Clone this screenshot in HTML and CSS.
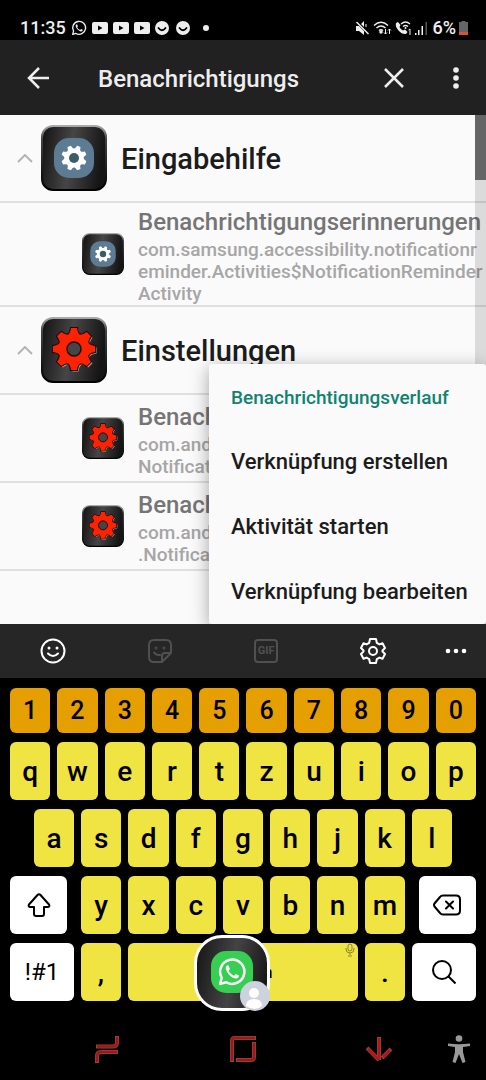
FILE: index.html
```
<!DOCTYPE html>
<html lang="de">
<head>
    <meta charset="UTF-8">
    <meta name="viewport" content="width=device-width, initial-scale=1.0">
    <title>Benachrichtigungs</title>
    <link rel="stylesheet" href="styles.css">
</head>
<body>
    <!-- shared app icons -->
    <svg class="defs" width="0" height="0" aria-hidden="true">
        <defs>
            <linearGradient id="tile" x1="0" y1="0" x2="1" y2="0.15">
                <stop offset="0" stop-color="#111"/>
                <stop offset="0.5" stop-color="#464646"/>
                <stop offset="1" stop-color="#151515"/>
            </linearGradient>
            <linearGradient id="rim" x1="0" y1="0" x2="0" y2="1">
                <stop offset="0" stop-color="#aaa"/>
                <stop offset="0.2" stop-color="#444"/>
                <stop offset="1" stop-color="#000"/>
            </linearGradient>
            <path id="tooth" d="M-7-13 Q-3.500-16-3-21H3Q3.500-16 7-13Z"/>
            <g id="gear">
                <circle r="15.500"/>
                <use href="#tooth"/>
                <use href="#tooth" transform="rotate(45)"/>
                <use href="#tooth" transform="rotate(90)"/>
                <use href="#tooth" transform="rotate(135)"/>
                <use href="#tooth" transform="rotate(180)"/>
                <use href="#tooth" transform="rotate(225)"/>
                <use href="#tooth" transform="rotate(270)"/>
                <use href="#tooth" transform="rotate(315)"/>
            </g>
            <symbol id="app-blue" viewBox="0 0 66 66">
                <rect x="1" y="1" width="64" height="64" rx="11" fill="url(#tile)" stroke="url(#rim)" stroke-width="2"/>
                <rect x="13" y="13" width="40" height="40" rx="15" fill="#5d7b92"/>
                <g transform="translate(33 33)">
                    <use href="#gear" transform="rotate(22.500) scale(0.600)" fill="#fff"/>
                    <circle r="5" fill="#3d5d66"/>
                </g>
            </symbol>
            <symbol id="app-red" viewBox="0 0 66 66">
                <rect x="1" y="1" width="64" height="64" rx="11" fill="url(#tile)" stroke="url(#rim)" stroke-width="2"/>
                <use href="#gear" transform="translate(34.500 33.500)" fill="#b39a85"/>
                <use href="#gear" transform="translate(33 32)" fill="#240500" stroke="#240500" stroke-width="2"/>
                <use href="#gear" transform="translate(33 32)" fill="#fb2304"/>
                <circle cx="33" cy="32" r="7" fill="#454545" stroke="#220c08" stroke-width="1.500"/>
            </symbol>
            <symbol id="youtube" viewBox="0 0 16 12">
                <path fill="#eee" fill-rule="evenodd" d="M2 0H14Q16 0 16 2V10Q16 12 14 12H2Q0 12 0 10V2Q0 0 2 0ZM6 3.500V8.500L10.500 6Z"/>
            </symbol>
            <symbol id="face" viewBox="0 0 14 14">
                <circle cx="7" cy="7" r="7" fill="#eee"/>
                <path d="M3.500 7Q7 11.500 10.500 7" fill="none" stroke="#000" stroke-width="1.800" stroke-linecap="round"/>
            </symbol>
            <symbol id="whatsapp" viewBox="0 0 24 24">
                <path d="M2.500 21.500L3.800 16.600A9.700 9.700 0 1 1 7.400 20.200Z" fill="none" stroke="currentColor" stroke-width="2" stroke-linejoin="round"/>
                <path d="M8.500 6.500C7 7 6.500 9 7.600 11C9 14 11.500 16.400 14.500 17.200C16.500 17.500 17.800 16.200 17.600 14.800L15 13.500L13.700 15C11.800 14.300 10.300 13 9.300 11L10.300 9.600L9.300 6.800Z" fill="currentColor"/>
            </symbol>
        </defs>
    </svg>

    <div class="statusbar">
        <div class="status-left">
            <span>11:35</span>
            <svg width="16" height="16"><use href="#whatsapp"/></svg>
            <svg width="16" height="12"><use href="#youtube"/></svg>
            <svg width="16" height="12"><use href="#youtube"/></svg>
            <svg width="16" height="12"><use href="#youtube"/></svg>
            <svg width="14" height="14"><use href="#face"/></svg>
            <svg class="face-last" width="14" height="14"><use href="#face"/></svg>
            <i class="dot"></i>
        </div>
        <div class="status-right">
            <svg width="15" height="14" viewBox="0 0 15 14"><path d="M1 5H4L9 0V14L4 10H1Z" fill="#eee"/><path d="M1 0L14 13" stroke="#000" stroke-width="3"/><path d="M1.500 1L13.500 13" stroke="#eee" stroke-width="1.500"/><path d="M11 3V6" stroke="#eee"/></svg>
            <svg width="19" height="14" viewBox="0 0 19 14" fill="none" stroke="#eee" stroke-width="1.500"><path d="M1 4.500Q8 -2 15 4.500M3.500 7Q8 3 12.500 7M6 9.500Q8 8 10 9.500"/><circle cx="8" cy="11" r="1" fill="#eee"/><path d="M12.500 8V13M11 11.500L12.500 13L14 11.500M16.500 13V8M15 9.500L16.500 8L18 9.500" stroke-width="1"/></svg>
            <svg width="17" height="14" viewBox="0 0 17 14"><path d="M1 2L3 1L5.500 4L4.500 6Q5.500 8.500 8 9.500L10 8.500L12.500 11L11 13Q7 13.500 3.500 9.500Q0 5.500 1 2Z" fill="#eee"/><path d="M6 3Q10.500 -1 15 3M8 5.500Q10.500 3.500 13 5.500" fill="none" stroke="#eee" stroke-width="1.300"/><circle cx="10.500" cy="7" r="1" fill="#eee"/><path d="M13.500 9L15 8V14" fill="none" stroke="#eee"/></svg>
            <svg width="12" height="13" viewBox="0 0 12 13" fill="#eee"><path d="M0 11H1.500V13H0ZM3 8H4.500V13H3ZM6.500 4H8V13H6.500Z"/><path d="M10.500 0H12V13H10.500Z" fill="#555"/></svg>
            <span>6%</span>
            <svg width="9" height="14" viewBox="0 0 9 14"><path d="M2.500 0H6.500V1H9V14H0V1H2.500Z" fill="#666"/><path d="M0 11H9V14H0Z" fill="#e0512f"/></svg>
        </div>
    </div>

    <header>
        <button class="icon-btn" aria-label="Zurück">
            <svg width="22" height="22" viewBox="0 0 22 22" fill="none" stroke="#eee" stroke-width="2.500"><path d="M22 11H2M12 1L2 11L12 21"/></svg>
        </button>
        <input class="search" type="text" value="Benachrichtigungs" aria-label="Suche">
        <button class="icon-btn" aria-label="Löschen">
            <svg width="20" height="20" viewBox="0 0 20 20" stroke="#eee" stroke-width="2.500"><path d="M1 1L19 19M19 1L1 19"/></svg>
        </button>
        <button class="icon-btn more" aria-label="Mehr">
            <svg width="6" height="22" viewBox="0 0 6 22" fill="#eee"><circle cx="3" cy="3" r="2.800"/><circle cx="3" cy="11" r="2.800"/><circle cx="3" cy="19" r="2.800"/></svg>
        </button>
    </header>

    <main>
        <button class="group">
            <svg class="chevron" width="16" height="9" viewBox="0 0 16 9"><path d="M1 8L8 1L15 8"/></svg>
            <svg width="66" height="66"><use href="#app-blue"/></svg>
            <span>Eingabehilfe</span>
        </button>
        <button class="entry">
            <svg width="42" height="42"><use href="#app-blue"/></svg>
            <span class="entry-text">
                <span class="name">Benachrichtigungserinnerungen</span>
                <span class="path">com.samsung.accessibility.notificationr<br>eminder.Activities$NotificationReminder<br>Activity</span>
            </span>
        </button>
        <button class="group">
            <svg class="chevron" width="16" height="9" viewBox="0 0 16 9"><path d="M1 8L8 1L15 8"/></svg>
            <svg width="66" height="66"><use href="#app-red"/></svg>
            <span>Einstellungen</span>
        </button>
        <button class="entry short">
            <svg width="42" height="42"><use href="#app-red"/></svg>
            <span class="entry-text">
                <span class="name">Benachrichtigungen</span>
                <span class="path">com.android.settings.Settings$<br>NotificationActivity</span>
            </span>
        </button>
        <button class="entry short">
            <svg width="42" height="42"><use href="#app-red"/></svg>
            <span class="entry-text">
                <span class="name">Benachrichtigungsverlauf</span>
                <span class="path">com.android.settings.notification<br>.NotificationHistory</span>
            </span>
        </button>
        <div class="scrollbar"><div class="thumb"></div></div>
        <div class="menu">
            <h2>Benachrichtigungsverlauf</h2>
            <button>Verknüpfung erstellen</button>
            <button>Aktivität starten</button>
            <button>Verknüpfung bearbeiten</button>
        </div>
    </main>

    <div class="toolbar">
        <button aria-label="Emojis"><svg width="26" height="26" viewBox="0 0 26 26" fill="none" stroke="#fff" stroke-width="2" stroke-linecap="round"><circle cx="13" cy="13" r="11.500"/><path d="M8 15.500Q13 20.500 18 15.500"/><circle cx="9" cy="10" r="1.500" fill="#fff" stroke="none"/><circle cx="17" cy="10" r="1.500" fill="#fff" stroke="none"/></svg></button>
        <button aria-label="Sticker"><svg width="26" height="26" viewBox="0 0 26 26" fill="none" stroke="#505050" stroke-width="2" stroke-linecap="round" stroke-linejoin="round"><path d="M15 24H7Q2 24 2 19V7Q2 2 7 2H19Q24 2 24 7V15L15 24V18Q15 15 18 15H24M7 14.500Q9 17.500 13 17"/><circle cx="9" cy="10" r="0.500"/><circle cx="17" cy="10" r="0.500"/></svg></button>
        <button aria-label="GIF"><span class="gif">GIF</span></button>
        <button aria-label="Einstellungen"><svg width="26" height="26" viewBox="0 0 26 26" fill="none" stroke="#fff" stroke-width="2" stroke-linejoin="round"><path d="M10 1H16L16.800 4.800L19.500 6.400L22.500 5.200L25 10L22.500 12.500V13.500L25 16L22.500 20.800L19.500 19.600L16.800 21.200L16 25H10L9.200 21.200L6.500 19.600L3.500 20.800L1 16L3.500 13.500V12.500L1 10L3.500 5.200L6.500 6.400L9.200 4.800Z"/><circle cx="13" cy="13" r="4"/></svg></button>
        <button class="toolbar-more" aria-label="Mehr"><svg width="22" height="6" viewBox="0 0 22 6" fill="#fff"><circle cx="3" cy="3" r="2.300"/><circle cx="11" cy="3" r="2.300"/><circle cx="19" cy="3" r="2.300"/></svg></button>
    </div>

    <div class="keyboard">
        <div class="keys numbers">
            <button>1</button><button>2</button><button>3</button><button>4</button><button>5</button><button>6</button><button>7</button><button>8</button><button>9</button><button>0</button>
        </div>
        <div class="keys">
            <button>q</button><button>w</button><button>e</button><button>r</button><button>t</button><button>z</button><button>u</button><button>i</button><button>o</button><button>p</button>
        </div>
        <div class="keys middle">
            <button>a</button><button>s</button><button>d</button><button>f</button><button>g</button><button>h</button><button>j</button><button>k</button><button>l</button>
        </div>
        <div class="keys">
            <button class="special shift" aria-label="Umschalt"><svg width="24" height="24" viewBox="0 0 24 24" fill="none" stroke="#000" stroke-width="2" stroke-linejoin="round"><path d="M10.500 2Q12 0.500 13.500 2L22 11.500Q23 13.500 21 14H17V21Q17 23 15 23H9Q7 23 7 21V14H3Q1 13.500 2 11.500Z"/></svg></button>
            <button>y</button><button>x</button><button>c</button><button>v</button><button>b</button><button>n</button><button>m</button>
            <button class="special backspace" aria-label="Rücktaste"><svg width="28" height="22" viewBox="0 0 28 22" fill="none" stroke="#000" stroke-width="2" stroke-linecap="round" stroke-linejoin="round"><path d="M10 1.500H23Q27 1.500 27 5.500V16.500Q27 20.500 23 20.500H10Q8 20.500 7 19L1.500 12.500Q0.500 11 1.500 9.500L7 3Q8 1.500 10 1.500ZM13 7.500L20 14.500M20 7.500L13 14.500"/></svg></button>
        </div>
        <div class="keys">
            <button class="special wide symbols">!#1</button>
            <button class="mark">,</button>
            <button class="space">Deutsch<svg class="mic" width="10" height="14" viewBox="0 0 10 14" fill="none" stroke="#8d8528"><rect x="3" y="1" width="4" height="7" rx="2"/><path d="M1 5V6Q1 10 5 10Q9 10 9 6V5M5 10V12M3 13H7"/></svg></button>
            <button class="mark">.</button>
            <button class="special wide" aria-label="Suchen"><svg width="24" height="24" viewBox="0 0 24 24" fill="none" stroke="#000" stroke-width="2"><circle cx="10" cy="10" r="9"/><path d="M16.500 16.500L23.500 23.500"/></svg></button>
        </div>
        <button class="bubble" aria-label="WhatsApp">
            <svg width="42" height="42" viewBox="0 0 42 42"><rect width="42" height="42" rx="15" fill="#36cf51"/><svg x="6" y="6" width="30" height="30" color="#fff"><use href="#whatsapp"/></svg></svg>
            <svg class="avatar" width="30" height="30" viewBox="0 0 30 30"><circle cx="15" cy="15" r="15" fill="#ccd3dc"/><circle cx="14" cy="12" r="5" fill="#fff"/><path d="M6 25Q6 18 14 18Q22 18 22 25Q15 31 6 25Z" fill="#fff"/></svg>
        </button>
    </div>

    <nav>
        <button aria-label="Letzte Apps"><svg width="24" height="28" viewBox="0 0 24 28" fill="none"><g stroke="#8a4a42" stroke-width="4"><path d="M1 11.500H18Q22 11.500 22 7.500V1M23 17H6Q2 17 2 21V28"/></g><g stroke="#a51418" stroke-width="2.500"><path d="M2 11.500H18Q22 11.500 22 7.500V2M22 17H6Q2 17 2 21V27"/></g></svg></button>
        <button aria-label="Startseite"><svg width="26" height="26" viewBox="0 0 26 26" fill="none"><g stroke="#8a4a42" stroke-width="4"><path d="M2 26V5Q2 2 5 2H26M24 6V21Q24 24 21 24H6"/></g><g stroke="#a51418" stroke-width="2.500"><path d="M2 25V5Q2 2 5 2H25M24 7V21Q24 24 21 24H7"/></g></svg></button>
        <button aria-label="Zurück"><svg width="26" height="26" viewBox="0 0 26 26" fill="none"><g stroke="#8a4a42" stroke-width="4"><path d="M13 1V24M1 12L13 24M16 22L25 13"/></g><g stroke="#b51418" stroke-width="2.500"><path d="M13 2V23M2 13L13 24M17 21L24 14"/></g></svg></button>
        <button class="nav-last" aria-label="Bedienungshilfen"><svg width="24" height="28" viewBox="0 0 24 28" fill="#999"><circle cx="12" cy="3.500" r="3.300"/><path d="M1 8.500Q12 10 23 8.500V11L16 12V17L18.500 27L15.500 28L12 19L8.500 28L5.500 27L8 17V12L1 11Z"/></svg></button>
    </nav>
</body>
</html>
```
FILE: styles.css
```
* {
    margin: 0;
    padding: 0;
    box-sizing: border-box;
    font-family: 'Roboto', sans-serif;
}
body {
    background-color: #000;
    color: #1c1c1c;
    font-weight: 500;
}
button {
    border: 0;
    background: none;
    color: inherit;
    font-weight: 500;
    cursor: pointer;
}
svg {
    flex-shrink: 0;
}
.defs {
    position: absolute;
}

/* status bar */
.statusbar {
    height: 40px;
    padding: 16px 18px 0 20px;
    display: flex;
    justify-content: space-between;
    color: #eee;
    font-size: 18px;
    line-height: 24px;
}
.status-left, .status-right {
    display: flex;
    align-items: center;
}
.status-left {
    gap: 5px;
}
.face-last {
    margin-left: 2px;
}
.dot {
    width: 6px;
    height: 6px;
    margin-left: 8px;
    border-radius: 50%;
    background-color: #eee;
}
.status-right {
    gap: 3px;
}
.status-right span {
    margin-left: 3px;
}

/* search header */
header {
    height: 75px;
    padding: 0 10px 0 16px;
    display: flex;
    align-items: center;
    background-color: #212121;
}
.icon-btn {
    width: 44px;
    height: 44px;
    display: flex;
    align-items: center;
    justify-content: center;
}
.more {
    width: 40px;
    margin-left: 20px;
}
.search {
    flex: 1;
    min-width: 0;
    padding: 2px 0 0 38px;
    border: 0;
    outline: 0;
    background: none;
    color: #eee;
    font-size: 24px;
    font-weight: 500;
}

/* activity list */
main {
    position: relative;
    padding-bottom: 53px;
    overflow: hidden;
    background-color: #fafafa;
}
.group {
    width: 100%;
    height: 88px;
    padding-left: 17px;
    display: flex;
    align-items: center;
    border-bottom: 2px solid #dfdfdf;
    font-size: 29px;
}
.group span {
    padding-top: 2px;
    margin-left: 14px;
}
.chevron {
    margin-right: 8px;
    fill: none;
    stroke: #b5b5b5;
    stroke-width: 2;
}
.entry {
    width: 100%;
    height: 104px;
    padding-left: 82px;
    display: flex;
    align-items: center;
    gap: 14px;
    border-bottom: 2px solid #dfdfdf;
    text-align: left;
    white-space: nowrap;
}
.entry.short {
    height: 88px;
}
.entry-text {
    padding-top: 2px;
}
.name {
    display: block;
    color: #757575;
    font-size: 24px;
    line-height: 34px;
}
.path {
    display: block;
    color: #a6a6a6;
    font-size: 19px;
    line-height: 22px;
}
.scrollbar {
    position: absolute;
    top: 0;
    right: 0;
    bottom: 0;
    width: 11px;
    background-color: rgba(0, 0, 0, 0.12);
}
.thumb {
    height: 65px;
    background-color: #666;
}
.menu {
    position: absolute;
    right: 0;
    bottom: 0;
    width: 277px;
    background-color: #fafafa;
    border-radius: 3px;
    box-shadow: 0 4px 18px rgba(0, 0, 0, 0.35);
}
.menu h2 {
    padding: 2px 0 0 22px;
    color: #108370;
    font-size: 19px;
    font-weight: 500;
    line-height: 63px;
}
.menu button {
    display: block;
    width: 100%;
    height: 65px;
    padding-left: 22px;
    text-align: left;
    font-size: 22px;
}

/* keyboard */
.toolbar {
    height: 54px;
    display: flex;
    background-color: #262626;
}
.toolbar button {
    flex: 1;
    display: flex;
    align-items: center;
    justify-content: center;
}
.toolbar .toolbar-more {
    flex: 0 0 60px;
}
.gif {
    width: 24px;
    height: 24px;
    border: 2px solid #505050;
    border-radius: 4px;
    color: #505050;
    font-size: 11px;
    font-weight: 700;
    line-height: 20px;
}
.keyboard {
    position: relative;
    padding: 10px 10px 10px;
    display: flex;
    flex-direction: column;
    gap: 9px;
}
.keys {
    display: flex;
    gap: 7px;
}
.keys button {
    flex: 1;
    height: 58px;
    display: flex;
    align-items: center;
    justify-content: center;
    border-radius: 6px;
    background-color: #f0e442;
    color: #000;
    font-size: 28px;
}
.keys.numbers button {
    height: 45px;
    background-color: #e69f00;
    font-size: 25px;
}
.keys.middle {
    padding: 0 24px;
}
.keys .special {
    flex: 0 0 57px;
    background-color: #fff;
}
.keys .wide {
    flex-basis: 64px;
}
.shift {
    margin-right: 7px;
}
.backspace {
    margin-left: 7px;
}
.keys .symbols {
    font-size: 24px;
    font-weight: 400;
}
.keys .mark {
    flex: 0 0 40px;
}
.keys .space {
    position: relative;
    font-size: 16px;
}
.mic {
    position: absolute;
    top: 0;
    right: 3px;
}
.bubble {
    position: absolute;
    left: 40%;
    bottom: 0;
    width: 76px;
    height: 76px;
    padding-bottom: 2px;
    display: flex;
    align-items: center;
    justify-content: center;
    border: 3px solid #fff;
    border-radius: 28px;
    background: linear-gradient(100deg, #151515, #444 50%, #111);
}
.avatar {
    position: absolute;
    right: -3px;
    bottom: -3px;
}

/* navigation */
nav {
    height: 70px;
    padding-left: 39px;
    display: flex;
}
nav button {
    flex: 1;
    display: flex;
    align-items: center;
    justify-content: center;
    padding-top: 5px;
}
nav .nav-last {
    flex: 0 0 39px;
    justify-content: flex-start;
}
```
